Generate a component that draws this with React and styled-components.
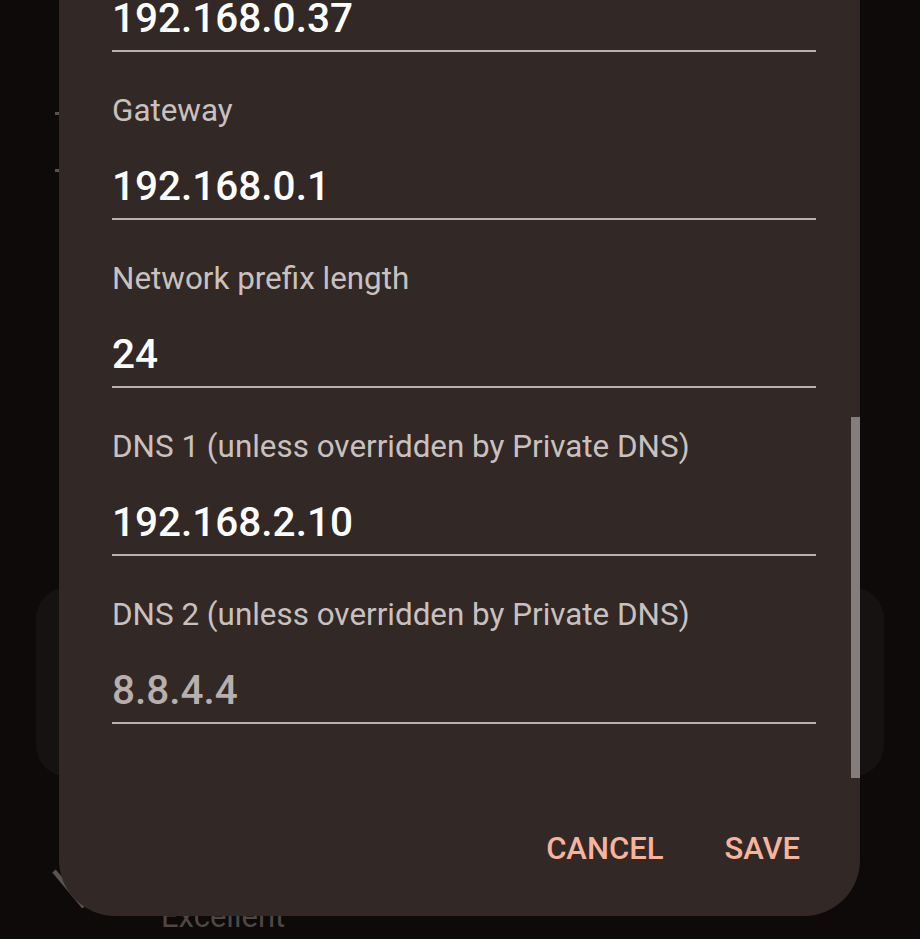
import React from 'react';
import styled, { createGlobalStyle } from 'styled-components';

const GlobalStyle = createGlobalStyle`
  html, body {
    margin: 0;
    padding: 0;
    background: #0e0a09;
  }
  body {
    font-family: Roboto, "Noto Sans", "Liberation Sans", sans-serif;
  }
`;

const fields = [
  { label: 'IP address', value: '192.168.0.37' },
  { label: 'Gateway', value: '192.168.0.1' },
  { label: 'Network prefix length', value: '24' },
  { label: 'DNS 1 (unless overridden by Private DNS)', value: '192.168.2.10' },
  { label: 'DNS 2 (unless overridden by Private DNS)', value: '8.8.4.4', hint: true },
];

function App() {
  return (
    <Screen>
      <GlobalStyle />
      <Backdrop>
        <Tick />
        <Tick $gap />
        <Card />
        <StatusRow>
          <svg width="44" height="48" viewBox="0 0 44 48">
            <path d="M6 6 L36 42" stroke="#5b5351" strokeWidth="4.5" fill="none" />
          </svg>
          <Quality>Excellent</Quality>
        </StatusRow>
      </Backdrop>
      <Dialog>
        <Fields>
          {fields.map((f) => (
            <Field key={f.label}>
              <Label>{f.label}</Label>
              <Value $hint={f.hint}>{f.value}</Value>
            </Field>
          ))}
        </Fields>
        <Actions>
          <TextButton>CANCEL</TextButton>
          <TextButton>SAVE</TextButton>
        </Actions>
        <ScrollThumb />
      </Dialog>
    </Screen>
  );
}

const Screen = styled.div`
  position: relative;
  width: 920px;
  height: 939px;
  overflow: hidden;
  background: #0e0a09;
`;

const Backdrop = styled.div`
  display: flex;
  flex-direction: column;
  padding-top: 112px;
`;

const Tick = styled.span`
  display: block;
  width: 4px;
  height: 3px;
  margin-left: 55px;
  margin-top: ${(p) => (p.$gap ? '54px' : '0')};
  background: #5a5250;
`;

const Card = styled.div`
  margin: 415px 36px 0;
  height: 190px;
  border-radius: 32px;
  background: #161211;
`;

const StatusRow = styled.div`
  display: flex;
  align-items: flex-start;
  margin-top: 88px;
  padding-left: 48px;
`;

const Quality = styled.span`
  margin-left: 69px;
  margin-top: 34px;
  font-size: 31px;
  line-height: 36px;
  color: #4f4745;
`;

const Dialog = styled.div`
  position: absolute;
  left: 59px;
  bottom: 23px;
  width: 801px;
  background: #322826;
  border-radius: 56px;
  box-sizing: border-box;
  padding: 0 44px 49px 53px;
`;

const Fields = styled.div`
  display: flex;
  flex-direction: column;
`;

const Field = styled.div`
  display: flex;
  flex-direction: column;
  padding: 41px 0 9px;
  border-bottom: 2px solid #b9b1af;
`;

const Label = styled.div`
  font-size: 31.4px;
  line-height: 36px;
  color: #c9c1bf;
`;

const Value = styled.div`
  margin-top: 34px;
  font-size: 40.5px;
  line-height: 46px;
  font-weight: 500;
  color: ${(p) => (p.$hint ? '#b7afad' : '#ffffff')};
`;

const Actions = styled.div`
  display: flex;
  justify-content: flex-end;
  gap: 61px;
  padding-top: 107px;
  padding-right: 16px;
`;

const TextButton = styled.button`
  border: none;
  background: transparent;
  padding: 0;
  font-family: inherit;
  font-size: 31px;
  line-height: 36px;
  font-weight: 500;
  color: #f7b39b;
  cursor: pointer;
`;

const ScrollThumb = styled.div`
  position: absolute;
  right: 0;
  bottom: 138px;
  width: 9px;
  height: 361px;
  background: #857d7b;
`;

export default App;
